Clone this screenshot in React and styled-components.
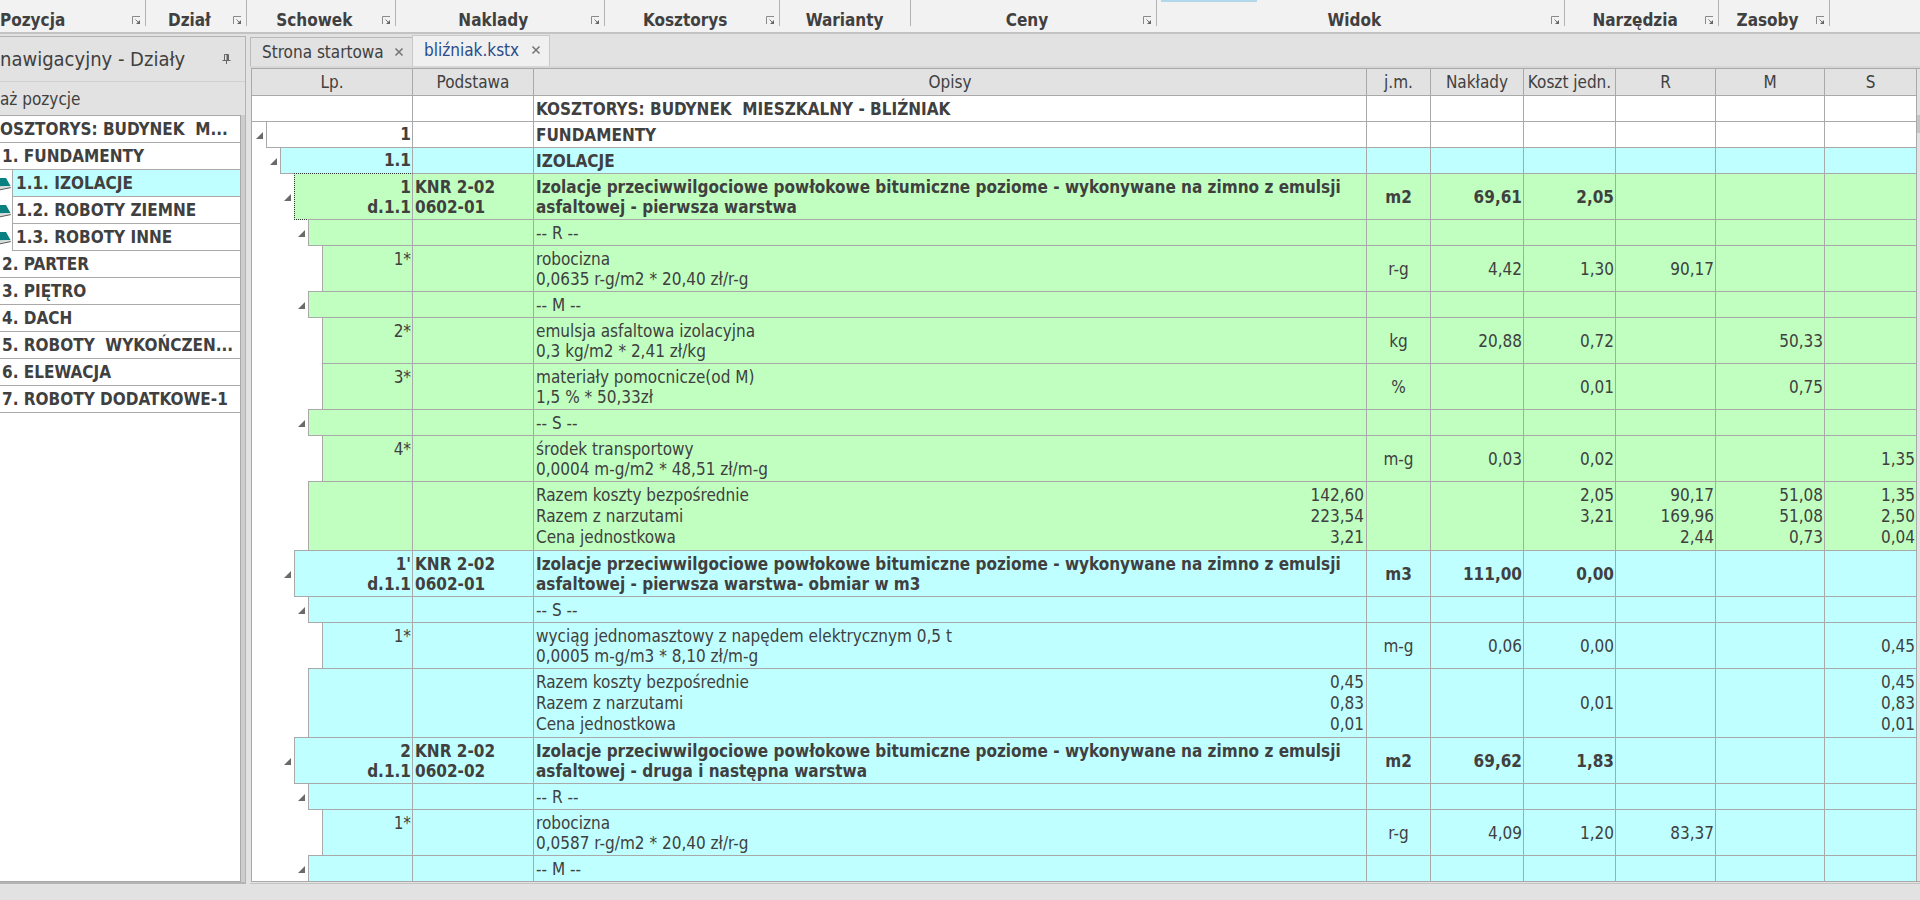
import React from "react";
import styled, { createGlobalStyle } from "styled-components";

const GlobalStyle = createGlobalStyle`
  * { box-sizing: border-box; }
  html, body, #root { height: 100%; }
  body {
    margin: 0;
    overflow: hidden;
    background: #e2e2e2;
    color: #404040;
    font: 17px/20px "DejaVu Sans Condensed", "Noto Sans", "Liberation Sans", sans-serif;
  }
  button, input { font: inherit; color: inherit; }
`;

const line = "#a9a9a9";
const fills = { white: "#ffffff", cyan: "#c0ffff", green: "#c0ffc0" };

const Window = styled.div`
  height: 100%;
  display: flex;
  flex-direction: column;
`;

const Ribbon = styled.div`
  flex: none;
  height: 34px;
  display: flex;
  background: #f2f2f2;
  border-bottom: 2px solid #c3c3c3;
`;

const RibbonGroup = styled.section`
  flex: ${(p) => p.$grow} 1 0;
  height: 26px;
  display: flex;
  align-items: flex-end;
  position: relative;
  border-right: 1px solid #b2b2b2;
`;

const RibbonLabel = styled.h2`
  flex: 1;
  margin: 0;
  font-size: 17px;
  line-height: 12px;
  text-align: ${(p) => (p.$start ? "left" : "center")};
`;

const Launcher = styled.button`
  flex: none;
  width: 9px;
  height: 9px;
  margin: 0 4px 1px 0;
  padding: 0;
  border: 0;
  background: none;
  display: flex;
`;

const PressedTool = styled.span`
  position: absolute;
  top: 0;
  left: 4px;
  width: 96px;
  height: 2px;
  background: #b3d7ea;
`;

const RibbonRest = styled.div`
  flex: 90 1 0;
`;

const Workspace = styled.div`
  flex: 1;
  min-height: 0;
  display: flex;
  gap: 4px;
  padding-bottom: 16px;
`;

const NavPanel = styled.aside`
  flex: none;
  width: 246px;
  margin-top: 2px;
  display: flex;
  flex-direction: column;
  border: 1px solid #b4b4b4;
  border-left: 0;
  border-bottom: 2px solid #b4b4b4;
`;

const NavHeader = styled.header`
  flex: none;
  height: 45px;
  display: flex;
  align-items: center;
  justify-content: space-between;
  padding-right: 14px;
  border-bottom: 1px solid #d0d0d0;
`;

const NavTitle = styled.h1`
  margin: 0;
  font-size: 20px;
  line-height: 24px;
  font-weight: 400;
`;

const IconButton = styled.button`
  display: flex;
  padding: 0;
  border: 0;
  background: none;
`;

const NavCaption = styled.div`
  flex: none;
  height: 33px;
  line-height: 34px;
`;

const NavBody = styled.div`
  flex: 1;
  margin-right: 4px;
  border: 1px solid ${line};
  border-left: 0;
  background: #fff;
  box-shadow: 4px 0 0 #cdcdcd;
`;

const NavList = styled.ul`
  list-style: none;
  margin: 0;
  padding: 0;
`;

const NavItem = styled.li`
  height: 27px;
  display: flex;
  align-items: stretch;
  font-weight: 700;
`;

const BookSlot = styled.span`
  flex: none;
  width: 12px;
  display: flex;
  align-items: center;
`;

const NavLink = styled.a`
  flex: 1;
  min-width: 0;
  padding-left: ${(p) => p.$pad}px;
  color: inherit;
  text-decoration: none;
  line-height: 26px;
  white-space: pre;
  background: ${(p) => (p.$active ? fills.cyan : "transparent")};
  border-left: ${(p) => (p.$child ? 1 : 0)}px solid ${line};
  border-bottom: 1px solid ${line};
`;

const Main = styled.main`
  flex: 1;
  min-width: 0;
  display: flex;
  flex-direction: column;
  border-bottom: 1px solid #c4c4c4;
`;

const TabStrip = styled.div`
  flex: none;
  height: 34px;
  display: flex;
  align-items: flex-end;
  border-bottom: 2px solid #d6d6d6;
`;

const Tab = styled.div`
  width: ${(p) => (p.$active ? 138 : 162)}px;
  height: ${(p) => (p.$active ? 31 : 29)}px;
  display: flex;
  align-items: center;
  justify-content: space-between;
  padding: 0 8px ${(p) => (p.$active ? 2 : 0)}px 11px;
  border: 1px solid ${(p) => (p.$active ? "#c8c8c8" : "#b9b9b9")};
  border-bottom: 0;
  border-right-width: ${(p) => (p.$active ? 1 : 0)}px;
  background: ${(p) => (p.$active ? "#f0f0f0" : "#e2e2e2")};
  color: ${(p) => (p.$active ? "#2b4b8c" : "inherit")};
`;

const TabName = styled.button`
  padding: 0;
  border: 0;
  background: none;
`;

const GridFrame = styled.div`
  flex: 1;
  min-height: 0;
  display: flex;
  overflow: hidden;
  margin: 0 0 1px 1px;
  border: 1px solid ${line};
  border-right: 0;
  background: #fff;
`;

const TableArea = styled.div`
  flex: 1;
  min-width: 0;
  overflow: hidden;
`;

const ScrollTrack = styled.div`
  flex: none;
  width: 3px;
  padding-top: 46px;
  background: #e2e2e2;
`;

const ScrollThumb = styled.div`
  height: 18px;
  background: #c6c6c6;
`;

const Table = styled.table`
  width: 100%;
  table-layout: fixed;
  border-collapse: separate;
  border-spacing: 0;
`;

const Col = styled.col`
  width: ${(p) => p.$w};
`;

const Head = styled.th`
  height: 27px;
  padding: 0 0 1px;
  background: #e2e2e2;
  font-weight: 400;
  white-space: nowrap;
  border-right: 1px solid ${line};
  border-bottom: 1px solid ${line};
`;

const heights = { s: 26, m: 46, l: 69 };

const Row = styled.tr`
  height: ${(p) => heights[p.$size]}px;
  background: ${(p) => fills[p.$fill]};
  font-weight: ${(p) => (p.$bold ? 700 : 400)};
  line-height: ${(p) => (p.$size === "l" ? 21 : 20)}px;
`;

const Cell = styled.td`
  padding: 0 ${(p) => (p.$align === "right" ? 1 : 2)}px;
  text-align: ${(p) => p.$align || "left"};
  vertical-align: middle;
  white-space: pre;
  overflow: hidden;
  border-right: 1px solid ${line};
  border-bottom: 1px solid ${line};
`;

const TreeCell = styled.td`
  padding: 0;
  background: #fff;
`;

const TreeLine = styled.div`
  height: ${(p) => heights[p.$size] + 1}px;
  margin-top: -1px;
  display: flex;
  align-items: stretch;
`;

const Indent = styled.span`
  flex: none;
  width: ${(p) => p.$level * 14}px;
  display: flex;
  align-items: center;
  justify-content: flex-end;
  padding: 2px ${(p) => (p.$level ? 3 : 0)}px 0 0;
`;

const Ordinal = styled.div`
  flex: 1;
  padding: ${(p) => (p.$size === "s" ? 2 : 3)}px 1px 0 0;
  text-align: right;
  background: ${(p) => fills[p.$fill]};
  border: 1px ${(p) => (p.$focus ? "dotted #333" : `solid ${line}`)};
  border-left-width: ${(p) => (p.$level ? 1 : 0)}px;
  border-right: 1px solid ${line};
`;

const Totals = styled.div`
  display: flex;
  justify-content: space-between;
`;

const TotalValues = styled.span`
  text-align: right;
`;

const LauncherIcon = () => (
  <svg width="9" height="9" viewBox="0 0 9 9" fill="none" stroke="#8a8a8a" aria-hidden="true">
    <path d="M0.5 8V0.5H8" />
    <path d="M3.5 3.5L7 7" stroke="#777" />
    <path d="M8 4V8H4L8 4z" fill="#666" stroke="none" />
  </svg>
);

const PinIcon = () => (
  <svg width="9" height="11" viewBox="0 0 9 11" fill="none" stroke="#666" aria-hidden="true">
    <path d="M2.5 6V0.5H6.5V6" />
    <path d="M5.5 1V6" strokeWidth="2" />
    <path d="M0.5 6.5H8.5M4.5 7V10" />
  </svg>
);

const CloseIcon = () => (
  <svg width="10" height="10" viewBox="0 0 10 10" stroke="#777" strokeWidth="1.6" aria-hidden="true">
    <path d="M1.5 1.5L8.5 8.5M8.5 1.5L1.5 8.5" />
  </svg>
);

const ExpandIcon = () => (
  <svg width="7" height="7" viewBox="0 0 7 7" aria-hidden="true">
    <path d="M7 0V7H0z" fill="#6a6a6a" />
  </svg>
);

const BookIcon = () => (
  <svg width="11" height="14" viewBox="0 0 11 14" aria-hidden="true">
    <path d="M0 1L6 1L10.500 9L0 9.500z" fill="#0b8080" />
    <path d="M0 9.500L10.500 9L10.500 10.500L0 12.500z" fill="#dcdcdc" />
    <path d="M0 12.800L10.800 10.600" stroke="#5a5a5a" fill="none" />
  </svg>
);

const groups = [
  { name: "Pozycja", grow: 145, start: true },
  { name: "Dział", grow: 100 },
  { name: "Schowek", grow: 148 },
  { name: "Naklady", grow: 208 },
  { name: "Kosztorys", grow: 174 },
  { name: "Warianty", grow: 130, plain: true },
  { name: "Ceny", grow: 246 },
  { name: "Widok", grow: 407, pressed: true },
  { name: "Narzędzia", grow: 153 },
  { name: "Zasoby", grow: 110 },
];

const sections = [
  { text: "OSZTORYS: BUDYNEK  M...", pad: 0 },
  { text: "1. FUNDAMENTY", pad: 2 },
  { text: "1.1. IZOLACJE", pad: 3, child: true, active: true },
  { text: "1.2. ROBOTY ZIEMNE", pad: 3, child: true },
  { text: "1.3. ROBOTY INNE", pad: 3, child: true },
  { text: "2. PARTER", pad: 2 },
  { text: "3. PIĘTRO", pad: 2 },
  { text: "4. DACH", pad: 2 },
  { text: "5. ROBOTY  WYKOŃCZEN...", pad: 2 },
  { text: "6. ELEWACJA", pad: 2 },
  { text: "7. ROBOTY DODATKOWE-1", pad: 2 },
];

const columns = [
  ["Lp.", "161px"],
  ["Podstawa", "121px"],
  ["Opisy", "auto"],
  ["j.m.", "64px"],
  ["Nakłady", "93px"],
  ["Koszt jedn.", "92px"],
  ["R", "100px"],
  ["M", "109px"],
  ["S", "92px"],
];

const item = (fill, lp, base, text, unit, qty, cost, focus) => ({
  fill, size: "m", level: 3, open: true, bold: true, lp, base, text, unit, qty, cost, focus,
});
const kind = (fill, text) => ({ fill, size: "s", level: 4, open: true, text });
const resource = (fill, lp, text, unit, values) => ({ fill, size: "m", level: 5, lp, text, unit, ...values });
const totals = (fill, sums, values) => ({
  fill, size: "l", level: 4, sums,
  text: "Razem koszty bezpośrednie\nRazem z narzutami\nCena jednostkowa",
  ...values,
});

const desc = "Izolacje przeciwwilgociowe powłokowe bitumiczne poziome - wykonywane na zimno z emulsji\nasfaltowej - ";

const rows = [
  { fill: "white", size: "s", level: 0, bold: true, text: "KOSZTORYS: BUDYNEK  MIESZKALNY - BLIŹNIAK" },
  { fill: "white", size: "s", level: 1, open: true, bold: true, lp: "1", text: "FUNDAMENTY" },
  { fill: "cyan", size: "s", level: 2, open: true, bold: true, lp: "1.1", text: "IZOLACJE" },
  item("green", "1\nd.1.1", "KNR 2-02\n0602-01", desc + "pierwsza warstwa", "m2", "69,61", "2,05", true),
  kind("green", "-- R --"),
  resource("green", "1*", "robocizna\n0,0635 r-g/m2 * 20,40 zł/r-g", "r-g", { qty: "4,42", cost: "1,30", r: "90,17" }),
  kind("green", "-- M --"),
  resource("green", "2*", "emulsja asfaltowa izolacyjna\n0,3 kg/m2 * 2,41 zł/kg", "kg", { qty: "20,88", cost: "0,72", m: "50,33" }),
  resource("green", "3*", "materiały pomocnicze(od M)\n1,5 % * 50,33zł", "%", { cost: "0,01", m: "0,75" }),
  kind("green", "-- S --"),
  resource("green", "4*", "środek transportowy\n0,0004 m-g/m2 * 48,51 zł/m-g", "m-g", { qty: "0,03", cost: "0,02", s: "1,35" }),
  totals("green", "142,60\n223,54\n3,21", {
    cost: "2,05\n3,21\n ", r: "90,17\n169,96\n2,44", m: "51,08\n51,08\n0,73", s: "1,35\n2,50\n0,04",
  }),
  item("cyan", "1'\nd.1.1", "KNR 2-02\n0602-01", desc + "pierwsza warstwa- obmiar w m3", "m3", "111,00", "0,00"),
  kind("cyan", "-- S --"),
  resource("cyan", "1*", "wyciąg jednomasztowy z napędem elektrycznym 0,5 t\n0,0005 m-g/m3 * 8,10 zł/m-g", "m-g", { qty: "0,06", cost: "0,00", s: "0,45" }),
  totals("cyan", "0,45\n0,83\n0,01", { cost: "0,01", s: "0,45\n0,83\n0,01" }),
  item("cyan", "2\nd.1.1", "KNR 2-02\n0602-02", desc + "druga i następna warstwa", "m2", "69,62", "1,83"),
  kind("cyan", "-- R --"),
  resource("cyan", "1*", "robocizna\n0,0587 r-g/m2 * 20,40 zł/r-g", "r-g", { qty: "4,09", cost: "1,20", r: "83,37" }),
  kind("cyan", "-- M --"),
];

const Lines = styled.span`
  white-space: pre;
`;

function EstimateRow({ row }) {
  return (
    <Row $size={row.size} $fill={row.fill} $bold={row.bold}>
      <TreeCell>
        <TreeLine $size={row.size}>
          <Indent $level={row.level}>
            {row.open && <IconButton aria-label="Zwiń"><ExpandIcon /></IconButton>}
          </Indent>
          <Ordinal $size={row.size} $fill={row.fill} $level={row.level} $focus={row.focus}>
            <Lines>{row.lp}</Lines>
          </Ordinal>
        </TreeLine>
      </TreeCell>
      <Cell>{row.base}</Cell>
      <Cell>
        {row.sums ? (
          <Totals><span>{row.text}</span><TotalValues>{row.sums}</TotalValues></Totals>
        ) : row.text}
      </Cell>
      <Cell $align="center">{row.unit}</Cell>
      <Cell $align="right">{row.qty}</Cell>
      <Cell $align="right">{row.cost}</Cell>
      <Cell $align="right">{row.r}</Cell>
      <Cell $align="right">{row.m}</Cell>
      <Cell $align="right">{row.s}</Cell>
    </Row>
  );
}

export default function App() {
  return (
    <Window>
      <GlobalStyle />
      <Ribbon>
        {groups.map((g) => (
          <RibbonGroup key={g.name} $grow={g.grow}>
            {g.pressed && <PressedTool />}
            <RibbonLabel $start={g.start}>{g.name}</RibbonLabel>
            {!g.plain && <Launcher aria-label={g.name}><LauncherIcon /></Launcher>}
          </RibbonGroup>
        ))}
        <RibbonRest />
      </Ribbon>
      <Workspace>
        <NavPanel>
          <NavHeader>
            <NavTitle>nawigacyjny - Działy</NavTitle>
            <IconButton aria-label="Przypnij"><PinIcon /></IconButton>
          </NavHeader>
          <NavCaption>aż pozycje</NavCaption>
          <NavBody>
            <NavList>
              {sections.map((s) => (
                <NavItem key={s.text}>
                  {s.child && <BookSlot><BookIcon /></BookSlot>}
                  <NavLink href="#" $pad={s.pad} $child={s.child} $active={s.active}>{s.text}</NavLink>
                </NavItem>
              ))}
            </NavList>
          </NavBody>
        </NavPanel>
        <Main>
          <TabStrip>
            <Tab>
              <TabName>Strona startowa</TabName>
              <IconButton aria-label="Zamknij"><CloseIcon /></IconButton>
            </Tab>
            <Tab $active>
              <TabName>bliźniak.kstx</TabName>
              <IconButton aria-label="Zamknij"><CloseIcon /></IconButton>
            </Tab>
          </TabStrip>
          <GridFrame>
            <TableArea>
              <Table>
                <colgroup>
                  {columns.map(([name, w]) => <Col key={name} $w={w} />)}
                </colgroup>
                <thead>
                  <tr>{columns.map(([name]) => <Head key={name} scope="col">{name}</Head>)}</tr>
                </thead>
                <tbody>
                  {rows.map((row, i) => <EstimateRow key={i} row={row} />)}
                </tbody>
              </Table>
            </TableArea>
            <ScrollTrack><ScrollThumb /></ScrollTrack>
          </GridFrame>
        </Main>
      </Workspace>
    </Window>
  );
}
